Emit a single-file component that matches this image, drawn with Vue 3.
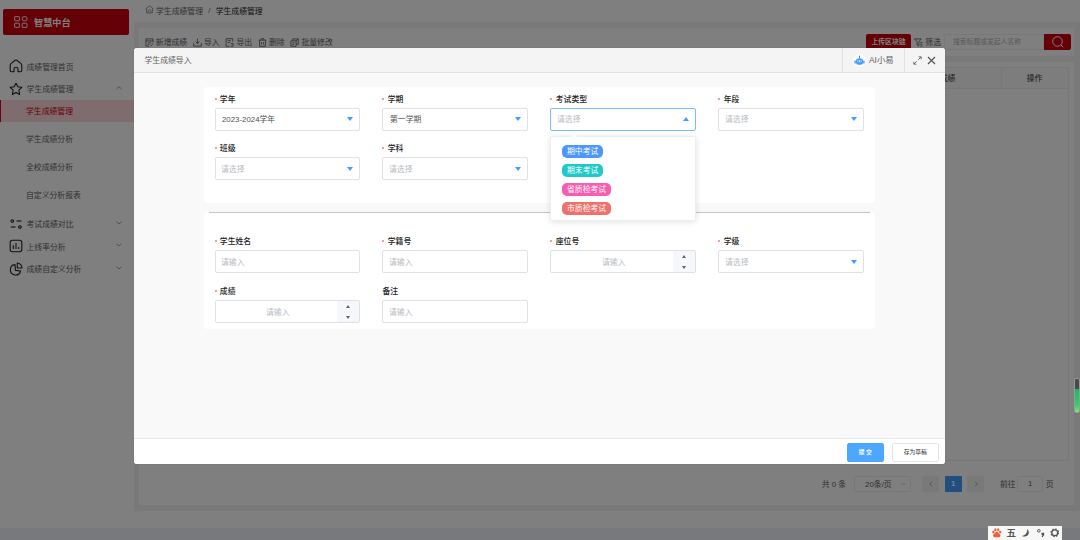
<template>
  <div class="page">
    <div class="layout">
      <div class="sidebar">
        <div class="logo">
          <svg class="logoIcon" viewBox="0 0 14 12">
            <rect x="0.6" y="0.6" width="4.8" height="4.2" rx="0.5" />
            <rect x="8.2" y="0.6" width="4.8" height="4.2" rx="1.8" />
            <rect x="0.6" y="7.2" width="4.8" height="4.2" rx="0.5" />
            <rect x="8.2" y="7.2" width="4.8" height="4.2" rx="0.5" />
          </svg>
          <span>智慧中台</span>
        </div>
        <div class="menu">
          <template v-for="item in menus" :key="item.name">
            <div class="menuItem">
              <svg class="menuIcon" viewBox="0 0 14 14">
                <path v-for="d in item.icon" :key="d" :d="d" />
              </svg>
              <span class="menuName">{{ item.name }}</span>
              <svg v-if="item.arrow" class="menuArrow" viewBox="0 0 6 4">
                <path :d="item.arrow == 'up' ? 'M0.5 3L3 0.7L5.5 3' : 'M0.5 0.7L3 3L5.5 0.7'" />
              </svg>
            </div>
            <div v-if="item.children" class="subMenu">
              <div
                v-for="(sub, index) in item.children"
                :key="sub"
                :class="['subItem', index == 0 ? 'active' : '']"
              >{{ sub }}</div>
            </div>
          </template>
        </div>
      </div>
      <div class="main">
        <div class="crumb">
          <svg class="crumbIcon" viewBox="0 0 10 10">
            <path d="M0.7 4.2L5 0.9L9.3 4.2M1.8 3.6V8.8H8.2V3.6M3.6 8.6V6.4Q3.6 5.2 5 5.2T6.4 6.4V8.6" />
          </svg>
          <span>学生成绩管理</span>
          <span class="slash">/</span>
          <span class="current">学生成绩管理</span>
        </div>
        <div class="content">
          <div class="toolbar">
            <span v-for="tool in tools" :key="tool.name" class="tool">
              <svg class="toolIcon" viewBox="0 0 10 10"><path :d="tool.icon" /></svg>
              {{ tool.name }}
            </span>
            <span class="chainBtn">上传区块链</span>
            <span class="filter">
              <svg class="toolIcon" viewBox="0 0 10 10">
                <path d="M0.6 1H8L5.4 4.2V9L3.4 7.8V4.2L0.6 1M7 5H9.4M7 7H9.4M7 9H9.4" />
              </svg>
              筛选
            </span>
            <span class="searchInput">搜索标题或发起人名称</span>
            <span class="searchBtn">
              <svg viewBox="0 0 14 14"><circle cx="6.5" cy="6.5" r="4.8" /><path d="M10 10L12.2 12.2" /></svg>
            </span>
          </div>
          <div class="tableCard">
            <div class="table">
              <div class="thead">
                <span class="th score">成绩</span>
                <span class="th operate">操作</span>
              </div>
            </div>
            <div class="pager">
              <span class="total">共 0 条</span>
              <span class="size">20条/页
                <svg viewBox="0 0 6 4"><path d="M0.8 0.8L3 3L5.2 0.8" /></svg>
              </span>
              <span class="pageBtn"><svg viewBox="0 0 6 6"><path d="M4 0.8L1.8 3L4 5.2" /></svg></span>
              <span class="pageBtn on">1</span>
              <span class="pageBtn next"><svg viewBox="0 0 6 6"><path d="M2 0.8L4.2 3L2 5.2" /></svg></span>
              <span class="goto">前往</span>
              <span class="pageInput">1</span>
              <span>页</span>
            </div>
          </div>
        </div>
      </div>
    </div>
    <div class="bottomBar"></div>

    <div class="mask"></div>

    <div class="dialog">
      <div class="dialogHeader">
        <span class="dialogTitle">学生成绩导入</span>
        <div class="aiBox">
          <span class="aiLogo">
            <svg viewBox="0 0 12 12">
              <path d="M5.4 0.6H6.6V4H5.4Z" fill="#2f8dfa" />
              <path d="M0.6 6H1.8V9.4H0.6ZM10.2 6H11.4V9.4H10.2Z" fill="#1f77f2" />
              <rect x="2.2" y="3.8" width="7.6" height="6.8" rx="2.4" fill="#3b9bfd" />
              <rect x="3.4" y="5.6" width="5.2" height="2.2" rx="1.1" fill="#d9ecff" />
              <circle cx="4.7" cy="6.7" r="0.7" fill="#1f77f2" />
              <circle cx="7.3" cy="6.7" r="0.7" fill="#1f77f2" />
            </svg>
          </span>
          <span>AI小易</span>
        </div>
        <div class="dialogTools">
          <svg class="full" viewBox="0 0 9 9">
            <path d="M5.6 0.8H8.2V3.4M8 1L5.2 3.8M0.8 5.6V8.2H3.4M1 8L3.8 5.2" />
          </svg>
          <svg class="close" viewBox="0 0 9 9"><path d="M1 1L8 8M8 1L1 8" /></svg>
        </div>
      </div>
      <div class="dialogBody">
        <div v-for="(group, g) in groups" :key="g" :class="['card', g == 0 ? 'first' : 'second']">
          <div v-for="field in group" :key="field.label" class="field">
            <div class="label">
              <i v-if="field.required" class="star"></i>{{ field.label }}
            </div>
            <div :class="['control', field.type, field.open ? 'open' : '']">
              <span :class="[field.value ? 'value' : 'placeholder']">
                {{ field.value || (field.type == 'select' ? '请选择' : '请输入') }}
              </span>
              <i v-if="field.type == 'select'" class="caret"></i>
              <span v-if="field.type == 'number'" class="stepper">
                <i class="stepUp"></i>
                <i class="stepDown"></i>
              </span>
              <div v-if="field.open" class="dropdown">
                <div v-for="opt in options" :key="opt.name" class="option">
                  <span :class="['tag', opt.color]">{{ opt.name }}</span>
                </div>
              </div>
            </div>
          </div>
        </div>
      </div>
      <div class="dialogFooter">
        <span class="btn primary">提 交</span>
        <span class="btn">存为草稿</span>
      </div>
    </div>

    <div class="gauge"><div class="gaugeFill"></div></div>

    <div class="ime">
      <svg viewBox="0 0 10 10" class="paw">
        <ellipse cx="1.4" cy="4.3" rx="1.2" ry="1.5" />
        <ellipse cx="3.5" cy="1.9" rx="1.2" ry="1.6" />
        <ellipse cx="6.5" cy="1.9" rx="1.2" ry="1.6" />
        <ellipse cx="8.6" cy="4.3" rx="1.2" ry="1.5" />
        <path d="M5 4C6.5 4 6.9 5.7 8.3 6.5C9.6 7.7 8.8 9.7 7 9.7H3C1.2 9.7 0.4 7.7 1.7 6.5C3.1 5.7 3.5 4 5 4Z" />
      </svg>
      <span class="wu">五</span>
      <svg viewBox="0 0 10 10"><path d="M6.6 1C10.4 4.8 7 10.8 1 8.4C4.8 7.8 7 5 6.6 1Z" fill="#555" /></svg>
      <svg viewBox="0 0 10 10">
        <circle cx="3" cy="3" r="1.4" fill="none" stroke="#555" />
        <path d="M5.8 5H8.6V7.6L7 9.6H5.8L6.8 7.4H5.8Z" fill="#555" />
      </svg>
      <svg viewBox="0 0 10 10">
        <circle cx="5" cy="5" r="3.1" fill="none" stroke="#555" stroke-width="1.4" />
        <circle cx="5" cy="5" r="4" fill="none" stroke="#555" stroke-width="1.3" stroke-dasharray="1.5 1.64" />
      </svg>
    </div>
  </div>
</template>

<script setup>
import { ref } from 'vue'

// 左侧菜单
const menus = ref([
  {
    name: '成绩管理首页',
    icon: ['M5 12.8H2.6Q1.2 12.8 1.2 11.3V6.2Q1.2 5.3 2 4.6L5.8 1.5Q7 0.6 8.2 1.5L12 4.6Q12.8 5.3 12.8 6.2V11.3Q12.8 12.8 11.4 12.8H9V10Q9 8.2 7 8.2T5 10Z']
  },
  {
    name: '学生成绩管理',
    arrow: 'up',
    icon: ['M7 1.2L8.8 4.8L12.9 5.4L9.9 8.2L10.6 12.4L7 10.4L3.4 12.4L4.1 8.2L1.1 5.4L5.2 4.8Z'],
    children: ['学生成绩管理', '学生成绩分析', '全校成绩分析', '自定义分析报表']
  },
  {
    name: '考试成绩对比',
    arrow: 'down',
    icon: ['M2 4A1.3 1.3 0 1 0 4.6 4A1.3 1.3 0 1 0 2 4', 'M7.5 4H12.5', 'M1.8 10H6.5', 'M9.6 10A1.3 1.3 0 1 0 12.2 10A1.3 1.3 0 1 0 9.6 10']
  },
  {
    name: '上线率分析',
    arrow: 'down',
    icon: ['M3.4 1.2H10.6Q12.8 1.2 12.8 3.4V10.6Q12.8 12.8 10.6 12.8H3.4Q1.2 12.8 1.2 10.6V3.4Q1.2 1.2 3.4 1.2Z', 'M4.3 6.2V10', 'M7 4V10', 'M9.7 8V10']
  },
  {
    name: '成绩自定义分析',
    arrow: 'down',
    icon: ['M6 2.6A5.2 5.2 0 1 0 11.6 9L6.4 8.4Z', 'M8.3 1A4.8 4.8 0 0 1 13 6H8.3Z']
  }
])

// 顶部操作按钮
const tools = ref([
  { name: '新增成绩', icon: 'M9 5V1H1V9H4.6M1 3.2H9M3.2 5.4H7M3.2 7.2H5M6 9L9.2 6.2' },
  { name: '导入', icon: 'M5 0.8V6M2.8 4L5 6.2L7.2 4M0.7 5.6V9H9.3V5.6' },
  { name: '导出', icon: 'M8.6 4V0.8H1.2V9.2H5M3 3H6.6M3 5H5.4M6.4 6.2H9V9M6.4 9.2H9' },
  { name: '删除', icon: 'M0.8 2.4H9.2M3.4 2.2V0.8H6.6V2.2M1.8 2.6V9.2H8.2V2.6M4 4.6V7.2M6 4.6V7.2' },
  { name: '批量修改', icon: 'M1 3.2H6.8V9.2H1ZM3 3V1H9.2V7H7M2.6 5.4H5.2M2.6 7.2H4.4M6.8 3.2L9 1.2' }
])

// 表单字段
const groups = ref([
  [
    { label: '学年', required: true, type: 'select', value: '2023-2024学年' },
    { label: '学期', required: true, type: 'select', value: '第一学期' },
    { label: '考试类型', required: true, type: 'select', open: true },
    { label: '年段', required: true, type: 'select' },
    { label: '班级', required: true, type: 'select' },
    { label: '学科', required: true, type: 'select' }
  ],
  [
    { label: '学生姓名', required: true, type: 'input' },
    { label: '学籍号', required: true, type: 'input' },
    { label: '座位号', required: true, type: 'number' },
    { label: '学级', required: true, type: 'select' },
    { label: '成绩', required: true, type: 'number' },
    { label: '备注', type: 'input' }
  ]
])

// 考试类型选项
const options = ref([
  { name: '期中考试', color: 'blue' },
  { name: '期末考试', color: 'cyan' },
  { name: '省质检考试', color: 'pink' },
  { name: '市质检考试', color: 'red' }
])
</script>

<style>
body {
  margin: 0;
  overflow: hidden;
}
</style>

<style scoped>
.page {
  position: relative;
  width: 1080px;
  height: 540px;
  overflow: hidden;
  background: #fff;
  font-family: "Liberation Sans", "Noto Sans CJK SC", sans-serif;
  font-size: 7.85px;
  color: #606266;
}
.page * {
  box-sizing: border-box;
}
svg {
  display: block;
  fill: none;
  flex-shrink: 0;
}
.layout {
  display: flex;
  height: 528px;
}
.bottomBar {
  height: 12px;
  background: #f1f3f8;
}

/* 侧边栏 */
.sidebar {
  width: 134px;
}
.logo {
  display: flex;
  align-items: center;
  width: 126px;
  height: 26px;
  margin: 9px 0 0 3px;
  padding-left: 11px;
  border-radius: 2px;
  background: #cb000d;
  color: #fff;
  font-size: 9.2px;
  font-weight: bold;
}
.logoIcon {
  width: 14px;
  height: 12px;
  margin-right: 6px;
  stroke: #fff;
  stroke-width: 0.9;
}
.menu {
  margin-top: 20px;
}
.menuItem {
  display: flex;
  align-items: center;
  height: 22.5px;
  padding: 0 12px 0 9px;
}
.menuIcon {
  width: 14px;
  height: 14px;
  margin-right: 3.5px;
  stroke: #222;
  stroke-width: 1.1;
  stroke-linejoin: round;
}
.menuName {
  flex: 1;
}
.menuArrow {
  width: 6px;
  height: 4px;
  margin-top: -2px;
  stroke: #888;
  stroke-width: 0.8;
}
.subMenu {
  padding-bottom: 3.5px;
}
.subItem {
  height: 28px;
  padding-left: 26px;
  line-height: 29px;
}
.subItem.active {
  height: 22px;
  margin-bottom: 3px;
  padding-left: 25px;
  border-left: 1px solid #d9001b;
  background: #ffd9dc;
  line-height: 23px;
  color: #cb000d;
}

/* 右侧内容 */
.main {
  width: 946px;
}
.crumb {
  display: flex;
  align-items: center;
  height: 22px;
  padding: 0 0 2px 11px;
}
.crumbIcon {
  width: 9px;
  height: 9px;
  margin: -2px 2px 0 0;
  stroke: #777;
  stroke-width: 0.8;
}
.slash {
  margin: 0 5.2px;
}
.current {
  color: #222;
}
.content {
  height: 489px;
  padding: 6px 6px 6px 5px;
  background: #f3f3f3;
}
.toolbar {
  display: flex;
  align-items: center;
  height: 28px;
  padding: 0 3px 0 5.5px;
  background: #fff;
}
.tool,
.filter {
  display: flex;
  align-items: center;
  height: 16px;
  padding-bottom: 1px;
  margin-right: 5.5px;
  white-space: nowrap;
}
.toolIcon {
  width: 9px;
  height: 9px;
  margin: 1px 2.3px 0 0;
  stroke: #555;
  stroke-width: 0.9;
}
.chainBtn {
  width: 45px;
  height: 16px;
  margin: 0 3px 0 auto;
  border-radius: 2px;
  background: #cb000d;
  color: #fff;
  font-size: 6.8px;
  font-weight: bold;
  line-height: 16px;
  text-align: center;
}
.filter {
  margin-right: 3px;
}
.searchInput {
  width: 100px;
  height: 16px;
  padding-left: 8px;
  border: 1px solid #f0f0f0;
  font-size: 6.8px;
  line-height: 14px;
  color: #b0b3ba;
}
.searchBtn {
  display: flex;
  align-items: center;
  justify-content: center;
  width: 27px;
  height: 16px;
  border-radius: 0 2px 2px 0;
  background: #cb000d;
}
.searchBtn svg {
  width: 14px;
  height: 14px;
  stroke: #fff;
  stroke-width: 1;
}
.tableCard {
  height: 443px;
  margin-top: 6px;
  padding: 5px 5.5px 0 6px;
  background: #fff;
}
.table {
  height: 394px;
  border: 1px solid #efefef;
}
.thead {
  display: flex;
  justify-content: flex-end;
  height: 21px;
  border-bottom: 1px solid #eee;
  background: #fafafa;
}
.th {
  border-left: 1px solid #eee;
  line-height: 21px;
  color: #333;
  text-align: center;
}
.score {
  width: 107px;
}
.operate {
  width: 67px;
}
.pager {
  display: flex;
  align-items: center;
  justify-content: flex-end;
  margin-top: 14.5px;
  padding-right: 15px;
  height: 16px;
}
.size {
  display: flex;
  align-items: center;
  justify-content: space-between;
  width: 57px;
  height: 16px;
  margin: 0 11px 0 8px;
  padding: 0 4px 0 10px;
  border: 1px solid #eee;
  border-radius: 2px;
}
.size svg {
  width: 5px;
  height: 4px;
  stroke: #bbb;
}
.pageBtn {
  display: flex;
  align-items: center;
  justify-content: center;
  width: 17px;
  height: 16px;
  margin-right: 5.7px;
  border-radius: 1px;
  background: #f3f3f5;
}
.pageBtn svg {
  width: 6px;
  height: 6px;
  stroke: #999;
  stroke-width: 0.8;
}
.pageBtn.on {
  background: #409eff;
  color: #fff;
  font-weight: bold;
}
.pageBtn.next {
  margin-right: 15.5px;
}
.pageInput {
  width: 26px;
  height: 16px;
  margin: 0 2.5px 0 1.5px;
  border: 1px solid #eee;
  border-radius: 2px;
  line-height: 14px;
  text-align: center;
}

.mask {
  position: absolute;
  inset: 0;
  background: rgba(0, 0, 0, 0.5);
}

/* 导入弹窗 */
.dialog {
  position: absolute;
  left: 133.5px;
  top: 48.4px;
  display: flex;
  flex-direction: column;
  width: 811px;
  height: 416px;
  border-radius: 3px;
  background: #f9f9f9;
  box-shadow: 0 0 1px rgba(0, 0, 0, 0.3);
}
.dialogHeader {
  display: flex;
  height: 25px;
  border-bottom: 1px solid #e2e2e2;
  border-radius: 3px 3px 0 0;
  background: #f4f4f4;
  line-height: 25.5px;
}
.dialogTitle {
  flex: 1;
  padding-left: 11px;
}
.aiBox {
  display: flex;
  align-items: center;
  width: 62px;
  padding-left: 10px;
  border-left: 1px solid #e2e2e2;
  font-size: 8.4px;
}
.aiLogo {
  display: flex;
  align-items: center;
  justify-content: center;
  width: 13px;
  height: 13px;
  margin-right: 3.5px;
  border-radius: 50%;
  background: #fff;
}
.aiLogo svg {
  width: 11px;
  height: 11px;
}
.dialogTools {
  display: flex;
  align-items: center;
  width: 41px;
  padding-left: 8px;
  border-left: 1px solid #e2e2e2;
}
.full {
  width: 9px;
  height: 9px;
  margin-right: 5px;
  stroke: #666;
  stroke-width: 0.9;
}
.close {
  width: 9px;
  height: 9px;
  stroke: #555;
  stroke-width: 1.2;
}
.dialogBody {
  flex: 1;
  padding: 13.5px 70px 0;
}
.card {
  display: grid;
  grid-template-columns: repeat(4, 145.6px);
  column-gap: 22.4px;
  row-gap: 9.6px;
  align-content: start;
  border-radius: 4px;
  background: #fff;
}
.first {
  height: 116.5px;
  padding: 4px 11px 0;
}
.second {
  height: 117px;
  margin-top: 8.5px;
  padding: 0 11px;
}
.second::before {
  content: "";
  grid-column: 1 / -1;
  height: 1px;
  margin: 0 -6px 11px;
  background: #c4c4c4;
}
.label {
  display: flex;
  align-items: center;
  height: 15px;
  margin-bottom: 2px;
  color: #222;
  font-weight: 500;
}
.star {
  width: 2px;
  height: 2px;
  margin: 1px 3.3px 0 0;
  border-radius: 1px;
  background: #f37b7b;
}
.control {
  position: relative;
  display: flex;
  align-items: center;
  height: 23px;
  padding: 0 0 1px 5.5px;
  border: 1px solid #dfe1e6;
  border-radius: 2px;
  background: #fff;
}
.open {
  border-color: #79bbff;
}
.value,
.placeholder {
  flex: 1;
}
.value {
  padding-left: 1px;
  color: #505256;
}
.placeholder {
  color: #b9bcc4;
}
.caret {
  margin: 1px 6.5px 0 0;
  border: 3px solid transparent;
  border-top: 4px solid #409eff;
  border-bottom: 0;
}
.open .caret {
  border-top: 0;
  border-bottom: 4px solid #409eff;
}
.number {
  padding: 0 0 0 3px;
}
.number .placeholder {
  padding-bottom: 1px;
  text-align: center;
}
.stepper {
  display: flex;
  flex-direction: column;
  align-items: center;
  justify-content: space-between;
  width: 22px;
  height: 21px;
  padding: 3.5px 0;
  background: #f5f7fa;
}
.stepUp,
.stepDown {
  border: 2.5px solid transparent;
}
.stepUp {
  border-top: 0;
  border-bottom: 3px solid #606266;
}
.stepDown {
  border-bottom: 0;
  border-top: 3px solid #606266;
}
.dropdown {
  position: absolute;
  left: -1px;
  top: 27.5px;
  z-index: 2;
  width: 146px;
  height: 85px;
  padding: 4.5px 0 0 10.8px;
  border: 1px solid #eceef2;
  border-radius: 2px;
  background: #fff;
  box-shadow: 0 1px 6px rgba(0, 0, 0, 0.12);
}
.dropdown::before {
  content: "";
  position: absolute;
  left: 20px;
  top: -3px;
  border: 3px solid transparent;
  border-top: 0;
  border-bottom-color: #fff;
}
.option {
  display: flex;
  align-items: center;
  height: 19.1px;
}
.tag {
  height: 13.5px;
  padding: 0 4.7px;
  border-radius: 5px;
  line-height: 13.5px;
  color: #fff;
}
.blue {
  background: #4c96ff;
}
.cyan {
  background: #20c9c9;
}
.pink {
  background: #fa5cb0;
}
.red {
  background: #f0706c;
}
.dialogFooter {
  display: flex;
  align-items: center;
  justify-content: flex-end;
  height: 26px;
  padding: 1px 6px 0 0;
  border-top: 1px solid #e8e8e8;
  border-radius: 0 0 3px 3px;
  background: #fff;
}
.btn {
  width: 46.5px;
  height: 18.5px;
  border: 1px solid #e2e4e8;
  border-radius: 2px;
  font-size: 5.8px;
  line-height: 16.5px;
  color: #333;
  text-align: center;
}
.primary {
  width: 36.5px;
  margin-right: 8.5px;
  border-color: #4da6ff;
  background: #4da6ff;
  color: #fff;
  font-weight: bold;
}

/* 屏幕右侧悬浮条 */
.gauge {
  position: absolute;
  left: 1073.5px;
  top: 378px;
  display: flex;
  align-items: flex-end;
  width: 6px;
  height: 35px;
  border: 1px solid #999;
  border-radius: 2px;
  background: #4a4a4a;
}
.gaugeFill {
  width: 100%;
  height: 23px;
  background: linear-gradient(#17b965, #2fcf6c 70%, #74ea70);
}

/* 输入法 */
.ime {
  position: absolute;
  left: 988px;
  top: 526px;
  display: flex;
  align-items: center;
  gap: 5px;
  width: 74px;
  height: 14px;
  padding-left: 4px;
  background: #f7f7f7;
}
.ime svg {
  width: 9.5px;
  height: 9.5px;
}
.ime .paw {
  fill: #f0603c;
}
.wu {
  width: 9.5px;
  font-size: 9.5px;
  font-weight: bold;
  line-height: 14px;
  color: #555;
}
</style>
